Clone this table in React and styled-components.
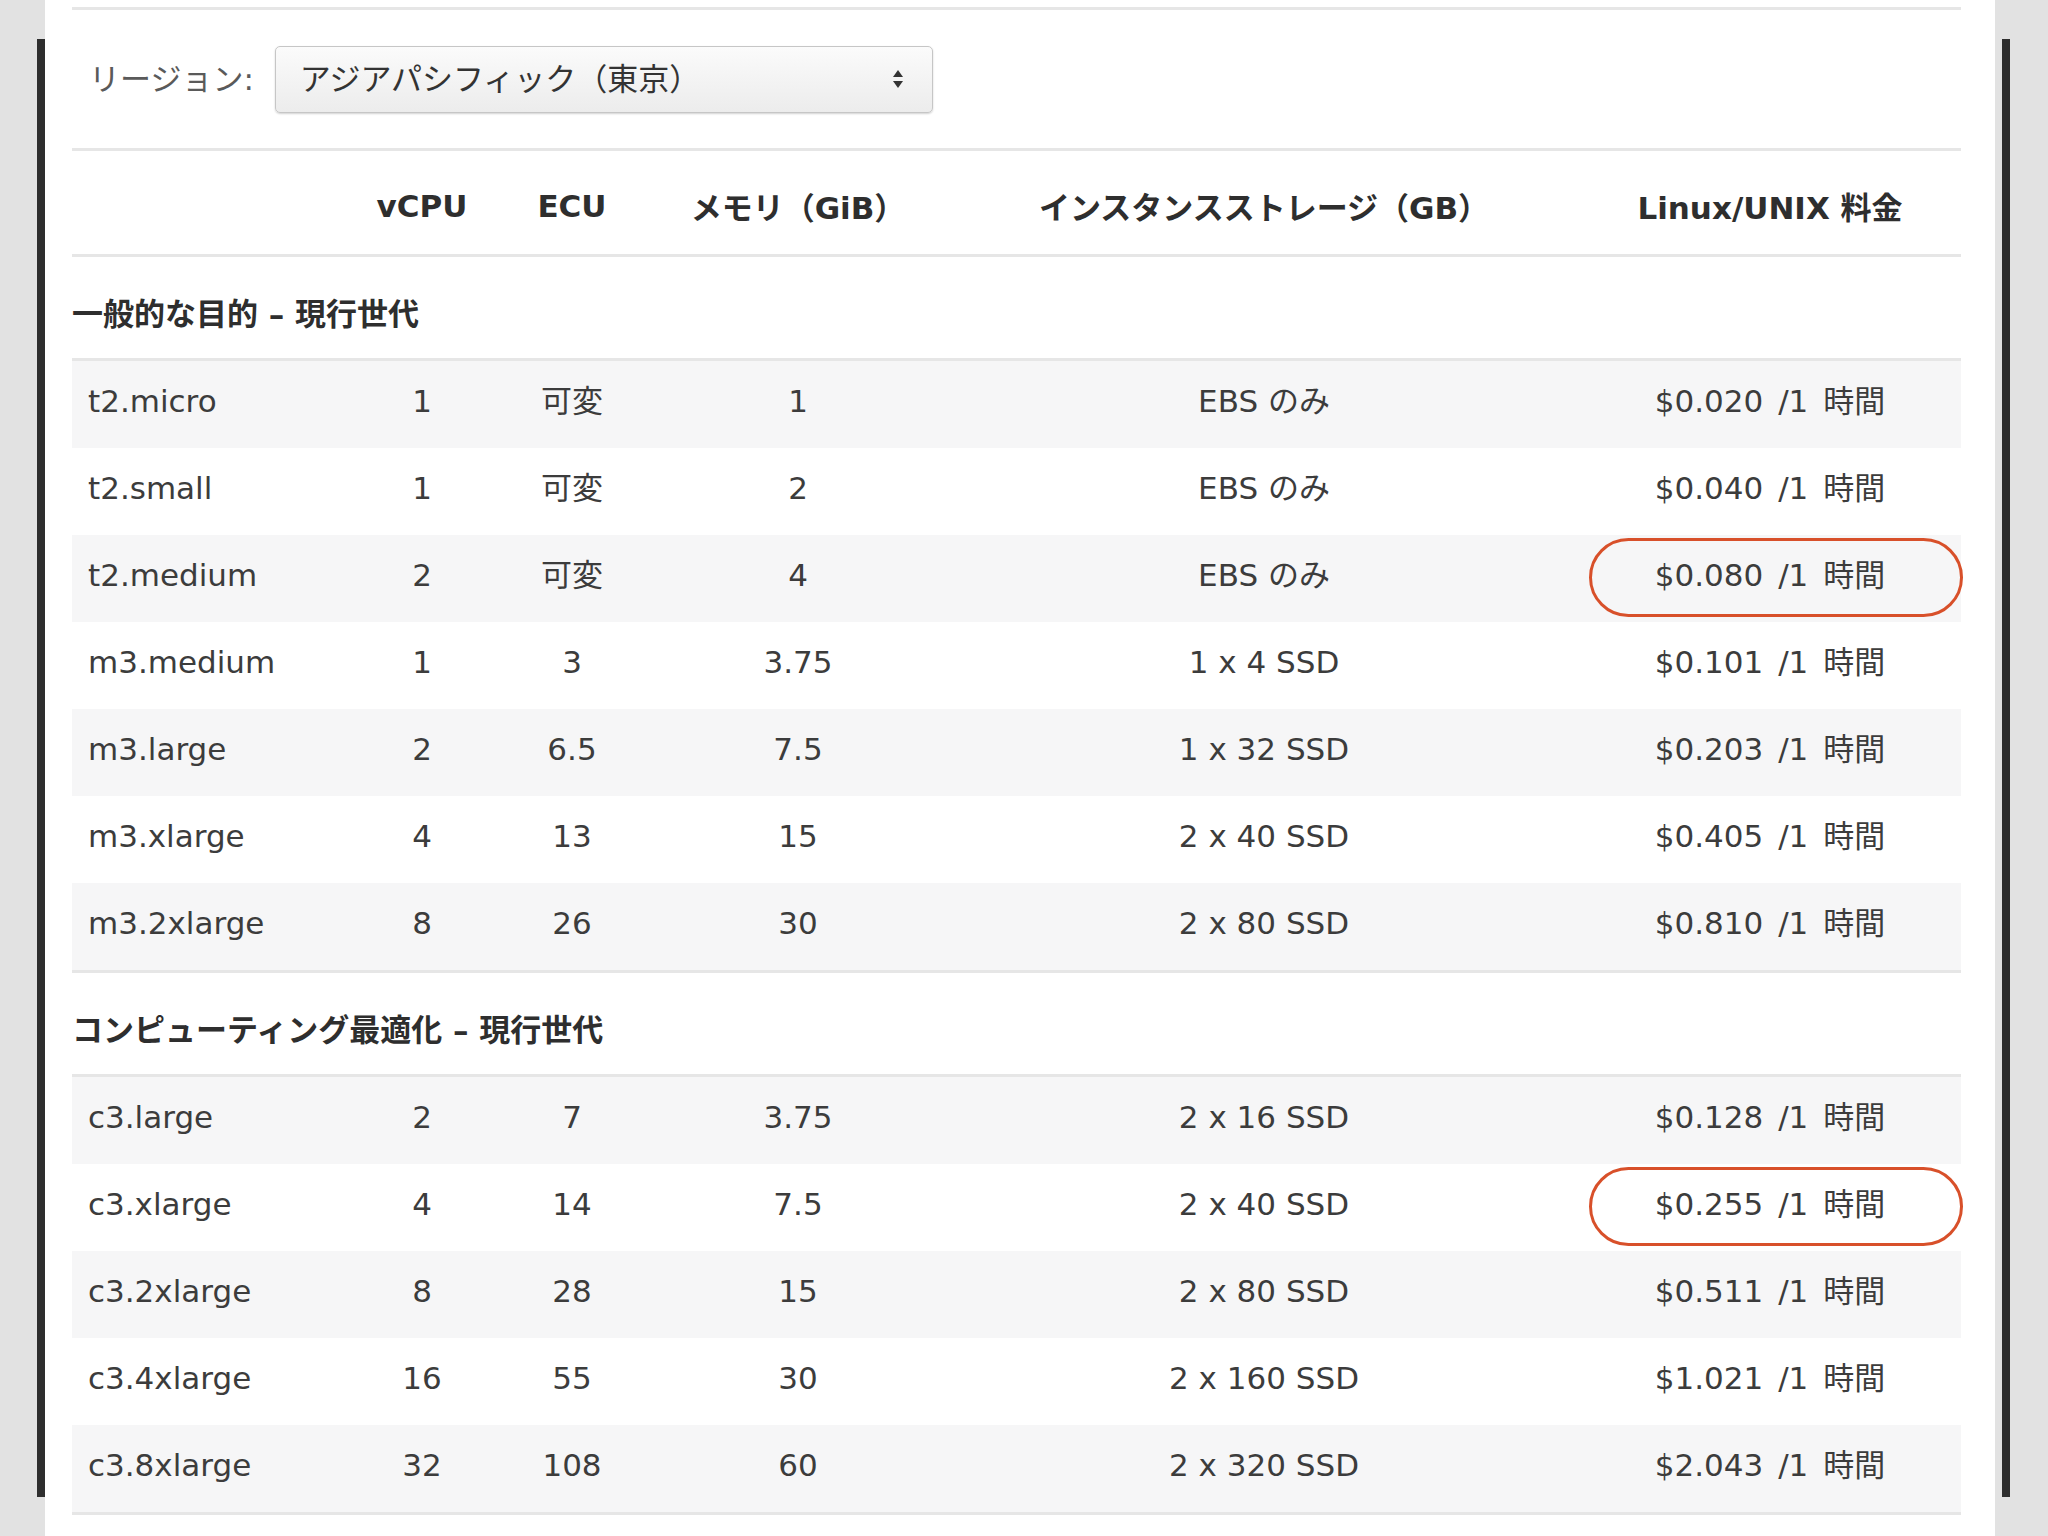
import React from 'react';
import styled, { createGlobalStyle } from 'styled-components';

const GlobalStyle = createGlobalStyle`
  * { box-sizing: border-box; }
  body {
    margin: 0;
    overflow: hidden;
    font-family: "DejaVu Sans", "Noto Sans CJK JP", sans-serif;
    color: #3c3c3c;
  }
`;

const COLS = '275px 150px 150px 302px 630px 382px';
const RULE = '#e6e6e6';

const sections = [
  {
    title: '一般的な目的 – 現行世代',
    rows: [
      ['t2.micro', '1', '可変', '1', 'EBS のみ', '$0.020'],
      ['t2.small', '1', '可変', '2', 'EBS のみ', '$0.040'],
      ['t2.medium', '2', '可変', '4', 'EBS のみ', '$0.080', true],
      ['m3.medium', '1', '3', '3.75', '1 x 4 SSD', '$0.101'],
      ['m3.large', '2', '6.5', '7.5', '1 x 32 SSD', '$0.203'],
      ['m3.xlarge', '4', '13', '15', '2 x 40 SSD', '$0.405'],
      ['m3.2xlarge', '8', '26', '30', '2 x 80 SSD', '$0.810'],
    ],
  },
  {
    title: 'コンピューティング最適化 – 現行世代',
    rows: [
      ['c3.large', '2', '7', '3.75', '2 x 16 SSD', '$0.128'],
      ['c3.xlarge', '4', '14', '7.5', '2 x 40 SSD', '$0.255', true],
      ['c3.2xlarge', '8', '28', '15', '2 x 80 SSD', '$0.511'],
      ['c3.4xlarge', '16', '55', '30', '2 x 160 SSD', '$1.021'],
      ['c3.8xlarge', '32', '108', '60', '2 x 320 SSD', '$2.043'],
    ],
  },
];

const Frame = styled.div`
  display: grid;
  grid-template-columns: 37px 8px 1950px 7px 8px 1fr;
  height: 1536px;
  background: #e2e2e2;
`;

const EdgeBar = styled.div`
  grid-column: ${(p) => p.col};
  grid-row: 1;
  margin: 39px 0;
  background: #2e2e2e;
`;

const Panel = styled.div`
  grid-column: 3;
  grid-row: 1;
  background: #fff;
  padding: 7px 34px 0 27px;
  overflow: hidden;
`;

const RegionBar = styled.div`
  display: flex;
  align-items: center;
  gap: 21px;
  height: 144px;
  padding-left: 17px;
  border-top: 3px solid ${RULE};
  border-bottom: 3px solid ${RULE};
`;

const RegionLabel = styled.span`
  font-size: 31px;
  color: #5a5a5a;
  padding-bottom: 6px;
`;

const Select = styled.div`
  display: flex;
  align-items: center;
  justify-content: space-between;
  width: 658px;
  height: 67px;
  padding: 0 28px 5px 24px;
  font-size: 31px;
  color: #333;
  background: linear-gradient(#fbfbfb, #ececec);
  border: 1px solid #c6c6c6;
  border-radius: 5px;
  box-shadow: 0 1px 2px rgba(0, 0, 0, 0.18);

  svg { margin-top: 5px; }
`;

const HeaderRow = styled.div`
  display: grid;
  grid-template-columns: ${COLS};
  align-items: center;
  height: 106px;
  padding-top: 6px;
  border-bottom: 3px solid ${RULE};
  font-size: 31px;
  font-weight: bold;
  color: #2e2e2e;
  text-align: center;
`;

const SectionTitle = styled.div`
  display: flex;
  align-items: center;
  height: 104px;
  padding-top: 7px;
  border-bottom: 3px solid ${RULE};
  font-size: 31px;
  font-weight: bold;
  color: #2e2e2e;
`;

const SectionBody = styled.div`
  border-bottom: 3px solid ${RULE};
`;

const Row = styled.div`
  display: grid;
  grid-template-columns: ${COLS};
  align-items: center;
  height: 87px;
  font-size: 31px;
  background: ${(p) => (p.$shade ? '#f6f6f7' : '#fff')};
`;

const Cell = styled.div`
  position: relative;
  height: 100%;
  display: flex;
  align-items: center;
  justify-content: ${(p) => (p.$left ? 'flex-start' : 'center')};
  padding: 0 0 7px ${(p) => (p.$left ? '16px' : '0')};
  line-height: 36px;
  white-space: pre;
  word-spacing: ${(p) => (p.$price ? '5px' : '0')};
`;

const Circle = styled.span`
  position: absolute;
  top: 3px;
  bottom: 5px;
  left: 10px;
  right: -2px;
  border: 3px solid #d8502a;
  border-radius: 40px;
  pointer-events: none;
`;

const SelectArrows = () => (
  <svg width="12" height="20" viewBox="0 0 12 20">
    <path d="M6 1 L11 8 L1 8 Z" fill="#333" />
    <path d="M6 19 L11 12 L1 12 Z" fill="#333" />
  </svg>
);

export default function App() {
  return (
    <>
      <GlobalStyle />
      <Frame>
        <EdgeBar col={2} />
        <Panel>
          <RegionBar>
            <RegionLabel>リージョン:</RegionLabel>
            <Select>
              <span>アジアパシフィック（東京）</span>
              <SelectArrows />
            </Select>
          </RegionBar>
          <HeaderRow>
            <div />
            <div>vCPU</div>
            <div>ECU</div>
            <div>メモリ（GiB）</div>
            <div>インスタンスストレージ（GB）</div>
            <div>Linux/UNIX 料金</div>
          </HeaderRow>
          {sections.map((section) => (
            <div key={section.title}>
              <SectionTitle>{section.title}</SectionTitle>
              <SectionBody>
                {section.rows.map((r, i) => (
                  <Row key={r[0]} $shade={i % 2 === 0}>
                    <Cell $left>{r[0]}</Cell>
                    <Cell>{r[1]}</Cell>
                    <Cell>{r[2]}</Cell>
                    <Cell>{r[3]}</Cell>
                    <Cell>{r[4]}</Cell>
                    <Cell $price>
                      {`${r[5]} /1 時間`}
                      {r[6] && <Circle />}
                    </Cell>
                  </Row>
                ))}
              </SectionBody>
            </div>
          ))}
        </Panel>
        <EdgeBar col={5} />
      </Frame>
    </>
  );
}
